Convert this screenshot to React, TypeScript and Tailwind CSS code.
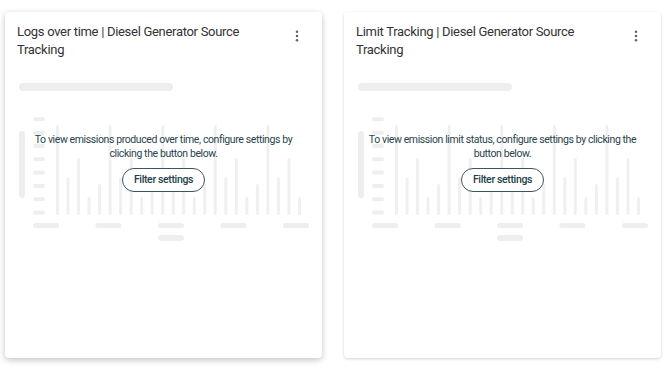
import { FC } from "react";

interface WidgetCardProps {
  title: string;
  message: string;
  raised?: boolean;
}

// heights of the placeholder bars repeat every 5 columns
const barHeights = [90, 38, 57, 18, 31];

const ChartSkeleton: FC = () => {
  return (
    <svg width="317" height="135" viewBox="0 0 317 135" className="block">
      <rect x="14" y="20" width="6" height="67" rx="3" fill="#eeeeee" />
      {Array.from({ length: 8 }).map((_, i) => (
        <rect
          key={`t${i}`}
          x="28"
          y={6.3 + i * 13.33}
          width="12"
          height="4"
          rx="2"
          fill="#eeeeee"
        />
      ))}
      {Array.from({ length: 24 }).map((_, i) => {
        const h = barHeights[i % 5];
        return (
          <rect
            key={`b${i}`}
            x={51 + i * 10.52}
            y={104 - h}
            width="3"
            height={h}
            rx="1.5"
            fill="#f0f0f0"
          />
        );
      })}
      {Array.from({ length: 5 }).map((_, i) => (
        <rect
          key={`x${i}`}
          x={28 + i * 62.5}
          y="112"
          width="26"
          height="5"
          rx="2.5"
          fill="#eeeeee"
        />
      ))}
      <rect x="153" y="124" width="26" height="6" rx="3" fill="#eeeeee" />
    </svg>
  );
};

const WidgetCard: FC<WidgetCardProps> = ({ title, message, raised }) => {
  return (
    <div
      className={`w-[317px] h-[346px] bg-white rounded-[4px] ${
        raised
          ? "shadow-[0_2px_6px_rgba(0,0,0,0.24)]"
          : "shadow-[0_1px_3px_rgba(0,0,0,0.18)]"
      }`}
    >
      <div className="flex items-start pt-[11px] pl-[12px]">
        <div className="w-[250px] text-[13px] tracking-[-0.3px] leading-[18px] text-[#333333]">
          {title}
        </div>
        <svg
          width="16"
          height="16"
          viewBox="0 0 16 16"
          className="ml-auto mr-[17px] mt-[5px] shrink-0"
        >
          <circle cx="8" cy="3.7" r="1.25" fill="#5f6368" />
          <circle cx="8" cy="8" r="1.25" fill="#5f6368" />
          <circle cx="8" cy="12.3" r="1.25" fill="#5f6368" />
        </svg>
      </div>
      <div className="ml-[14px] mt-[24px] w-[154px] h-[8px] rounded-full bg-[#eeeeee]" />
      <div className="relative mt-[20px]">
        <ChartSkeleton />
        <div className="absolute inset-x-0 top-[22px] flex flex-col items-center">
          <p className="w-[280px] text-center text-[10.5px] tracking-[-0.4px] leading-[14px] text-[#29434e]">
            {message}
          </p>
          <button
            type="button"
            className="mt-[7px] h-[24px] px-[11px] rounded-full border border-[#3d5560] bg-white text-[10.5px] tracking-[-0.35px] font-medium text-[#22404a]"
          >
            Filter settings
          </button>
        </div>
      </div>
    </div>
  );
};

export default function App() {
  return (
    <div className="w-[670px] h-[371px] bg-white font-['Roboto',sans-serif] flex gap-[22px] pl-[5px] pt-[12px]">
      <WidgetCard
        raised
        title="Logs over time | Diesel Generator Source Tracking"
        message="To view emissions produced over time, configure settings by clicking the button below."
      />
      <WidgetCard
        title="Limit Tracking | Diesel Generator Source Tracking"
        message="To view emission limit status, configure settings by clicking the button below."
      />
    </div>
  );
}
